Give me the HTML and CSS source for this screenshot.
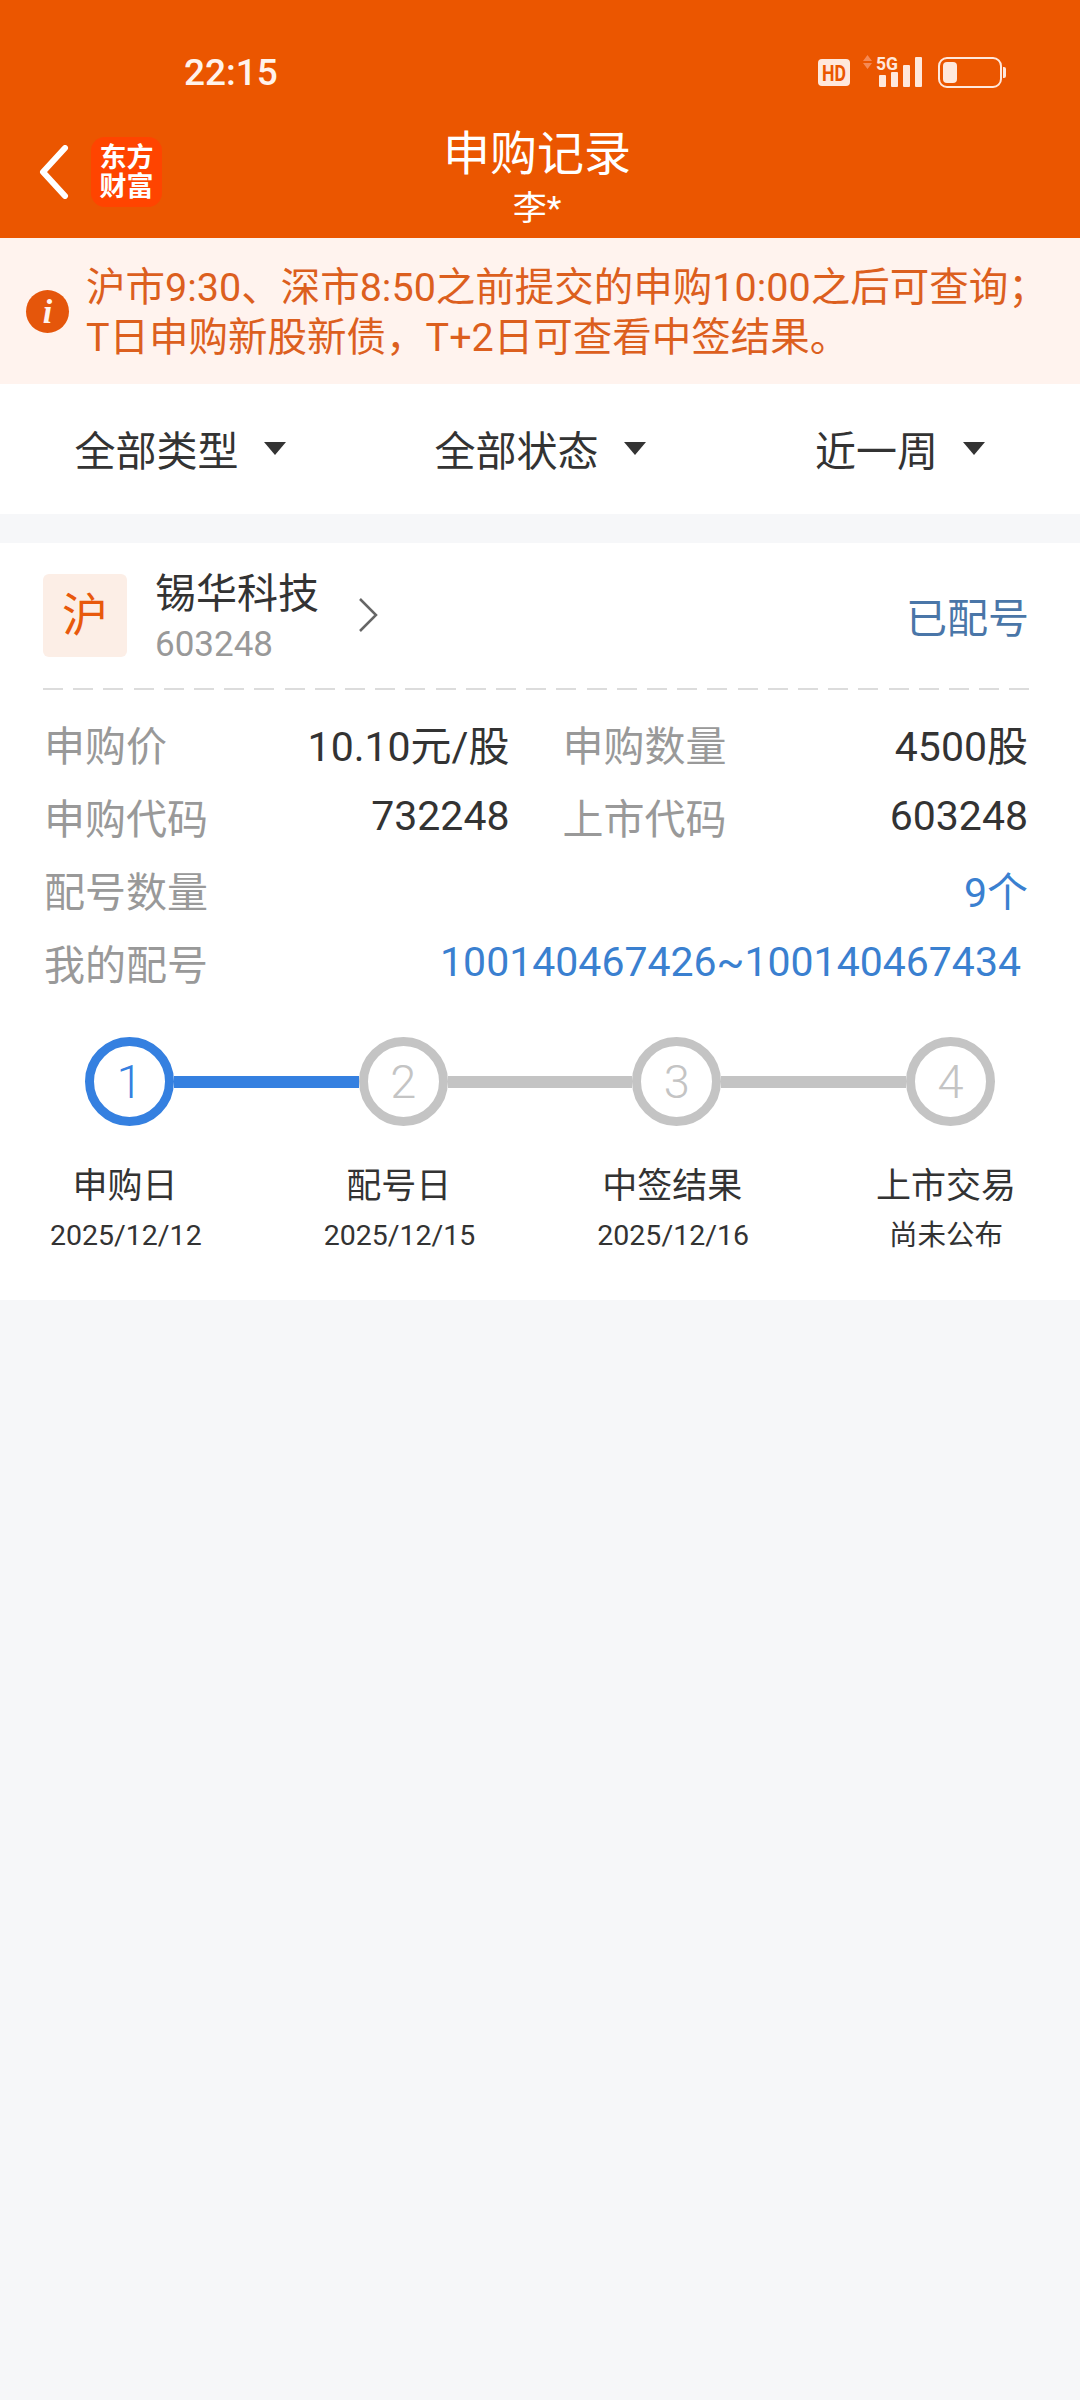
FILE: index.html
```html
<!DOCTYPE html>
<html lang="zh-CN">
<head>
    <meta charset="UTF-8">
    <meta name="viewport" content="width=device-width, initial-scale=1.0">
    <title>申购记录</title>
    <link rel="stylesheet" href="styles.css">
</head>
<body>

    <header class="header">
        <div class="status-bar">
            <span class="time">22:15</span>
            <svg class="status-icons" viewBox="816 52 190 40" width="190" height="40">
                <rect x="818" y="59" width="32" height="27" rx="4" fill="#ffe8dc"/>
                <text x="834" y="81" class="hd-text" text-anchor="middle" textLength="24" lengthAdjust="spacingAndGlyphs">HD</text>
                <path d="M867.5 55l4.5 6h-9zM867.5 69l-4.5-6h9z" fill="#f58a55"/>
                <text x="887" y="70" class="net-text" text-anchor="middle" textLength="22" lengthAdjust="spacingAndGlyphs">5G</text>
                <rect x="879" y="75" width="7" height="12" rx="1" fill="#ffe8dc"/>
                <rect x="891" y="72" width="7" height="15" rx="1" fill="#ffe8dc"/>
                <rect x="903" y="65" width="7" height="22" rx="1" fill="#ffe8dc"/>
                <rect x="915" y="57" width="7" height="30" rx="1" fill="#ffe8dc"/>
                <rect x="939" y="58" width="62" height="29" rx="8" fill="none" stroke="#ffe8dc" stroke-width="2"/>
                <rect x="943" y="62" width="14" height="21" rx="4" fill="#ffe8dc"/>
                <path d="M1003 67h1a2 2 0 0 1 2 2v7a2 2 0 0 1-2 2h-1z" fill="#ffe8dc"/>
            </svg>
        </div>
        <div class="nav">
            <div class="nav-left">
                <svg class="back" viewBox="0 0 30 54" width="30" height="54">
                    <path d="M26 3L4 27l22 24" fill="none" stroke="#fff" stroke-width="6" stroke-linecap="round" stroke-linejoin="round"/>
                </svg>
                <div class="logo">东方<br>财富</div>
            </div>
            <div class="nav-title">
                <h1>申购记录</h1>
                <p>李*</p>
            </div>
        </div>
    </header>

    <div class="notice">
        <div class="notice-icon">i</div>
        <p>沪市9:30、深市8:50之前提交的申购10:00之后可查询；<br>T日申购新股新债，T+2日可查看中签结果。</p>
    </div>

    <div class="filters">
        <div class="filter">全部类型<span class="caret"></span></div>
        <div class="filter">全部状态<span class="caret"></span></div>
        <div class="filter">近一周<span class="caret"></span></div>
    </div>

    <section class="card">
        <div class="card-top">
            <div class="market">沪</div>
            <div class="stock">
                <div class="stock-name">锡华科技</div>
                <div class="stock-code">603248</div>
            </div>
            <svg class="more" viewBox="0 0 20 34" width="20" height="34">
                <path d="M2 1l16 16L2 33" fill="none" stroke="#666" stroke-width="2.5"/>
            </svg>
            <div class="state">已配号</div>
        </div>
        <div class="divider"></div>

        <div class="details">
            <div class="row half"><span class="label">申购价</span><span class="value">10.10元/股</span></div>
            <div class="row half"><span class="label">申购数量</span><span class="value">4500股</span></div>
            <div class="row half"><span class="label">申购代码</span><span class="value">732248</span></div>
            <div class="row half"><span class="label">上市代码</span><span class="value">603248</span></div>
            <div class="row full"><span class="label">配号数量</span><span class="value blue">9个</span></div>
            <div class="row full"><span class="label">我的配号</span><span class="value blue inset">100140467426~100140467434</span></div>
        </div>

        <div class="track">
            <div class="dot active">1</div>
            <div class="line active"></div>
            <div class="dot">2</div>
            <div class="line"></div>
            <div class="dot">3</div>
            <div class="line"></div>
            <div class="dot">4</div>
        </div>
        <div class="steps">
            <div class="step"><div class="step-name">申购日</div><div class="step-date">2025/12/12</div></div>
            <div class="step"><div class="step-name">配号日</div><div class="step-date">2025/12/15</div></div>
            <div class="step"><div class="step-name">中签结果</div><div class="step-date">2025/12/16</div></div>
            <div class="step"><div class="step-name">上市交易</div><div class="step-date">尚未公布</div></div>
        </div>
    </section>

</body>
</html>
```

FILE: styles.css
```css
* {
    box-sizing: border-box;
}
body {
    margin: 0;
    height: 2400px;
    overflow: hidden;
    background-color: #f6f7f9;
    font-family: Roboto, "Noto Sans CJK SC", sans-serif;
    color: #333;
}
h1, p {
    margin: 0;
    font-weight: 400;
}

/* header */
.header {
    height: 238px;
    background-color: #eb5600;
    color: #fff;
}
.status-bar {
    display: flex;
    align-items: center;
    height: 123px;
    padding: 51px 74px 28px 184px;
}
.time {
    font-size: 37px;
    font-weight: 500;
    line-height: 44px;
    color: #fff3ec;
}
.status-icons {
    margin-top: -2px;
    margin-left: auto;
}
.hd-text {
    font: 700 22px Roboto, sans-serif;
    fill: #eb5600;
}
.net-text {
    font: 700 19px Roboto, sans-serif;
    fill: #ffe8dc;
}
.nav {
    display: grid;
    grid-template-columns: 1fr auto 1fr;
    height: 115px;
    padding-right: 6px;
}
.nav-left {
    display: flex;
    align-items: center;
    align-self: start;
    gap: 22px;
    padding: 14px 0 0 39px;
}
.logo {
    width: 71px;
    height: 70px;
    padding-top: 7px;
    border-radius: 14px;
    background-color: #ff4400;
    font-size: 27px;
    font-weight: 700;
    line-height: 29px;
    text-align: center;
}
.nav-title {
    text-align: center;
}
.nav-title h1 {
    font-size: 47px;
    line-height: 62px;
}
.nav-title p {
    font-size: 34px;
    line-height: 46px;
}

/* notice */
.notice {
    display: flex;
    align-items: center;
    height: 146px;
    padding-left: 26px;
    background-color: #fff3ee;
    color: #dc5f1e;
}
.notice-icon {
    flex-shrink: 0;
    width: 43px;
    height: 43px;
    margin-right: 17px;
    border-radius: 50%;
    background-color: #e5560b;
    color: #fff3ee;
    font-family: "Liberation Serif", serif;
    font-size: 34px;
    font-style: italic;
    font-weight: 700;
    line-height: 43px;
    text-align: center;
}
.notice p {
    padding-top: 4px;
    font-size: 39.5px;
    line-height: 50px;
    white-space: nowrap;
}

/* filters */
.filters {
    display: grid;
    grid-template-columns: repeat(3, 1fr);
    height: 130px;
    padding-bottom: 2px;
    background-color: #fff;
}
.filter {
    display: flex;
    align-items: center;
    justify-content: center;
    font-size: 41px;
}
.caret {
    width: 0;
    height: 0;
    margin-left: 25px;
    border-top: 13px solid #333;
    border-left: 11px solid transparent;
    border-right: 11px solid transparent;
}

/* card */
.card {
    height: 757px;
    margin-top: 29px;
    padding: 30px 0 0;
    background-color: #fff;
}
.card-top {
    display: flex;
    align-items: center;
    height: 84px;
    margin: 0 51px 0 43px;
}
.market {
    width: 84px;
    height: 83px;
    border-radius: 6px;
    background-color: #fceee6;
    color: #e8590c;
    font-size: 46px;
    line-height: 83px;
    text-align: center;
}
.stock {
    margin-left: 28px;
    padding-top: 5px;
}
.stock-name {
    font-size: 41px;
    line-height: 52px;
}
.stock-code {
    padding-top: 2px;
    color: #999;
    font-size: 35px;
    line-height: 46px;
}
.more {
    margin-left: 39px;
}
.state {
    margin-left: auto;
    color: #4a76a8;
    font-size: 41px;
}
.divider {
    height: 2px;
    margin: 31px 51px 0 43px;
    background-image: repeating-linear-gradient(to right, #dcdcdc 0, #dcdcdc 20px, transparent 20px, transparent 30.2px);
}
.details {
    display: grid;
    grid-template-columns: 1fr 1fr;
    column-gap: 53px;
    margin: 16px 52px 0 44px;
}
.row {
    display: flex;
    align-items: center;
    justify-content: space-between;
    height: 73px;
    font-size: 41px;
}
.full {
    grid-column: 1 / -1;
}
.label {
    color: #999;
}
.blue {
    color: #3a80d0;
}
.inset {
    padding-right: 7px;
}

/* steps */
.track {
    display: flex;
    align-items: center;
    margin-top: 39px;
    padding: 0 85px;
}
.dot {
    flex-shrink: 0;
    width: 89px;
    height: 89px;
    border: 9px solid #c4c4c4;
    border-radius: 50%;
    color: #c4c4c4;
    font-size: 47px;
    font-weight: 300;
    line-height: 71px;
    text-align: center;
}
.dot.active {
    border-color: #3580e0;
    color: #3580e0;
}
.line {
    flex: 1;
    height: 12px;
    background-color: #c4c4c4;
}
.line.active {
    background-color: #3580e0;
}
.steps {
    display: flex;
    justify-content: space-between;
    margin-top: 36px;
    padding: 0 59px 0 50px;
}
.step {
    width: 150px;
    text-align: center;
    white-space: nowrap;
}
.step-name {
    font-size: 35px;
    line-height: 50px;
}
.step-date {
    padding-top: 1px;
    font-size: 28.5px;
    line-height: 46px;
}
```
